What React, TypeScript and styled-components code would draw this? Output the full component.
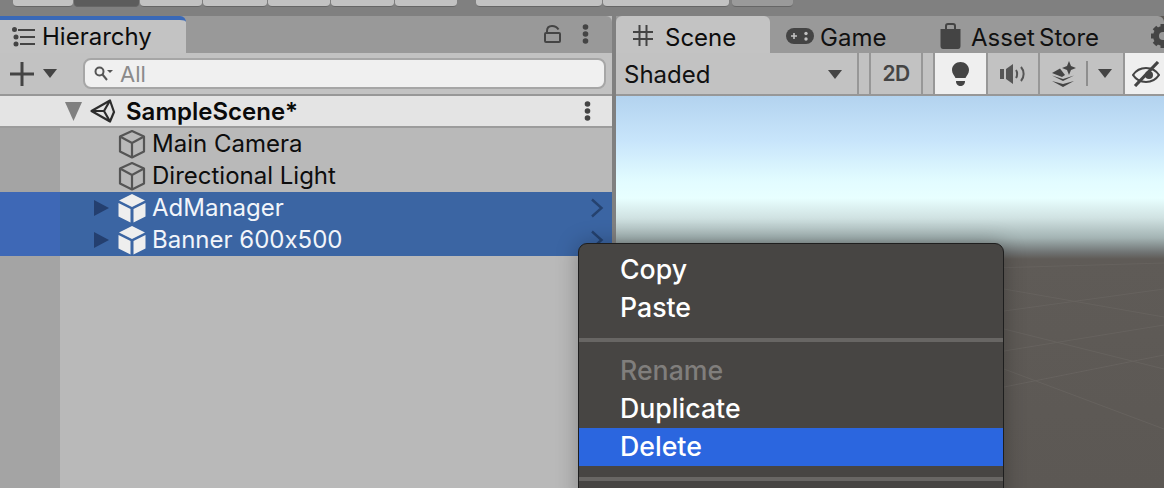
import React from "react"
import styled, { createGlobalStyle } from "styled-components"

const GlobalStyle = createGlobalStyle`
  html, body {
    margin: 0;
    padding: 0;
    width: 1164px;
    height: 488px;
    overflow: hidden;
    background: #808080;
    font-family: Inter, "Liberation Sans", sans-serif;
    font-feature-settings: "calt" 0;
  }
`

const Editor = styled.div`
  position: relative;
  width: 1164px;
  height: 488px;
  overflow: hidden;
  display: flex;
  flex-direction: column;
  background: #808080;
`

const TopBar = styled.div`
  height: 16px;
  flex: none;
  display: flex;
  align-items: flex-start;
  padding-left: 13px;
  gap: 1px;
`

const TopButton = styled.div<{ $w: number; $dark?: boolean; $dim?: boolean; $gapLeft?: number }>`
  width: ${(p) => p.$w}px;
  height: 7px;
  margin-left: ${(p) => p.$gapLeft || 0}px;
  border-radius: 0 0 4px 4px;
  background: ${(p) => (p.$dark ? "#5c5c5c" : p.$dim ? "#9a9a9a" : "#c2c2c2")};
  border-bottom: 1px solid #666;
  box-sizing: border-box;
`

const Panels = styled.div`
  flex: 1;
  display: flex;
  gap: 4px;
  min-height: 0;
`

const LeftPanel = styled.section`
  width: 612px;
  flex: none;
  display: flex;
  flex-direction: column;
  background: #b9b9b9;
`

const RightPanel = styled.section`
  flex: 1;
  display: flex;
  flex-direction: column;
  background: #5d5955;
  min-width: 0;
`

const TabStrip = styled.div`
  height: 37px;
  flex: none;
  display: flex;
  align-items: stretch;
  background: #999;
  border-radius: 0 6px 0 0;
`

const Tab = styled.div<{ $active?: boolean; $w?: number; $focus?: boolean }>`
  width: ${(p) => (p.$w ? `${p.$w}px` : "auto")};
  flex: none;
  box-sizing: border-box;
  display: flex;
  align-items: center;
  font-size: 24px;
  word-spacing: -2.5px;
  color: ${(p) => (p.$active ? "#0c0c0c" : "#111")};
  background: ${(p) => (p.$active ? "#c3c3c3" : "transparent")};
  border-radius: 0 6px 0 0;
  border-top: ${(p) => (p.$focus ? "4px solid #3a69b8" : "none")};
  white-space: nowrap;
`

const HierarchyTab = styled(Tab)`
  padding-left: 12px;
  gap: 6px;
`

const SceneTab = styled(Tab)`
  padding: 5px 0 0 17px;
  gap: 12px;
  border-radius: 6px 6px 0 0;
`

const PlainTab = styled(Tab)<{ $pad: number; $gap: number }>`
  padding: 5px 0 0 ${(p) => p.$pad}px;
  gap: ${(p) => p.$gap}px;
`

const GearSlot = styled.div`
  display: flex;
  align-items: center;
  padding-top: 3px;
`

const TabActions = styled.div`
  margin-left: auto;
  display: flex;
  align-items: center;
  gap: 21px;
  padding: 0 23px 1px 0;
`

const Toolbar = styled.div`
  height: 41px;
  flex: none;
  display: flex;
  align-items: center;
  background: #c2c2c2;
  border-bottom: 2px solid #979797;
`

const AddButton = styled.div`
  width: 83px;
  flex: none;
  display: flex;
  align-items: center;
  padding-left: 10px;
  gap: 9px;
  box-sizing: border-box;
`

const SearchField = styled.div`
  width: 523px;
  height: 31px;
  flex: none;
  box-sizing: border-box;
  display: flex;
  align-items: center;
  gap: 7px;
  padding-left: 9px;
  border: 2px solid #a6a6a6;
  border-radius: 8px;
  background: #f0f0f0;
  font-size: 22px;
  color: #8a8a8a;
`

const SceneRow = styled.div`
  height: 30px;
  flex: none;
  display: flex;
  align-items: center;
  padding-left: 65px;
  background: #e4e4e4;
  border-bottom: 2px solid #9c9c9c;
  font-size: 24px;
  font-weight: 600;
  color: #0a0a0a;
`

const SceneName = styled.span`
  margin-left: 10px;
`

const FoldGap = styled.span`
  width: 8px;
  flex: none;
`

const RowMenu = styled.div`
  margin-left: auto;
  padding-right: 21px;
  display: flex;
`

const Tree = styled.div`
  flex: 1;
  display: flex;
  flex-direction: column;
  background: linear-gradient(90deg, #a4a4a4 0, #a4a4a4 60px, #b9b9b9 60px);
`

const Row = styled.div<{ $selected?: boolean }>`
  height: 32px;
  flex: none;
  display: flex;
  align-items: center;
  padding-left: 94px;
  font-size: 24px;
  color: ${(p) => (p.$selected ? "#f2f5fa" : "#0d0d0d")};
  background: ${(p) =>
    p.$selected
      ? "linear-gradient(90deg, #3e68b6 0, #3e68b6 60px, #3b65a3 60px)"
      : "transparent"};
`

const Expander = styled.span`
  width: 24px;
  flex: none;
  display: flex;
`

const RowLabel = styled.span`
  margin-left: 6px;
  padding-bottom: 2px;
  white-space: nowrap;
`

const RowChevron = styled.span`
  margin-left: auto;
  padding-right: 8px;
  display: flex;
`

const SceneToolbar = styled(Toolbar)`
  align-items: stretch;
  gap: 2px;
  background: #979797;
`

const Dropdown = styled.div`
  width: 241px;
  flex: none;
  box-sizing: border-box;
  display: flex;
  align-items: center;
  justify-content: space-between;
  padding: 2px 15px 0 8px;
  background: #c2c2c2;
  font-size: 24px;
  color: #111;
`

const Spacer = styled.div`
  width: 10px;
  flex: none;
  background: #c2c2c2;
`

const ToolButton = styled.div<{ $w: number; $on?: boolean }>`
  width: ${(p) => p.$w}px;
  flex: none;
  display: flex;
  align-items: center;
  justify-content: center;
  gap: 10px;
  background: ${(p) => (p.$on ? "#efefef" : "#c2c2c2")};
  font-size: 21px;
  font-weight: 600;
  letter-spacing: -0.6px;
  color: #444;
`

const ToolDivider = styled.span`
  width: 2px;
  height: 25px;
  background: #8e8e8e;
`

const Viewport = styled.div`
  position: relative;
  flex: 1;
  overflow: hidden;
  background: linear-gradient(
    180deg,
    #b3d3ef 0,
    #c8e5fb 45px,
    #e2fcff 85px,
    #e8ffff 102px,
    #d0e2e2 122px,
    #a3b3b3 142px,
    #717575 156px,
    #5f5b57 163px,
    #5c5854 392px
  );
`

const GridLines = styled.svg`
  position: absolute;
  left: 0;
  top: 163px;
`

const ContextMenu = styled.div`
  position: absolute;
  left: 578px;
  top: 243px;
  width: 426px;
  height: 260px;
  box-sizing: border-box;
  padding-top: 7px;
  display: flex;
  flex-direction: column;
  background: #474543;
  border: 1px solid #1e1e1e;
  border-radius: 9px 9px 0 0;
  box-shadow: 0 0 22px rgba(0, 0, 0, 0.28);
`

const MenuItem = styled.div<{ $disabled?: boolean; $active?: boolean }>`
  height: 38px;
  flex: none;
  box-sizing: border-box;
  display: flex;
  align-items: center;
  padding: 0 0 2px 41px;
  font-size: 26.7px;
  font-weight: 500;
  color: ${(p) => (p.$disabled ? "#807e7c" : "#fff")};
  background: ${(p) => (p.$active ? "#2b66df" : "transparent")};
`

const MenuSeparator = styled.div`
  height: 4px;
  flex: none;
  margin: 11px 0 10px;
  background: #686664;
`

const UnityCube = ({ solid }: { solid?: boolean }) =>
  solid ? (
    <svg width="28" height="30" viewBox="0 0 28 30" style={{ flex: "none" }}>
      <path d="M14 1 L27 7.5 L14 14 L1 7.5 Z" fill="#eeeeee" />
      <path d="M0.5 10 L12.5 16 V29.5 L0.5 23.5 Z" fill="#eeeeee" />
      <path d="M27.5 10 L15.5 16 V29.5 L27.5 23.5 Z" fill="#eeeeee" />
    </svg>
  ) : (
    <svg width="28" height="30" viewBox="0 0 28 30" fill="none" stroke="#555" strokeWidth="2.2" style={{ flex: "none" }}>
      <path d="M14 2 L26 7.5 V22.5 L14 28.5 L2 22.5 V7.5 Z" strokeLinejoin="round" />
      <path d="M2 7.5 L14 14 L26 7.5 M14 14 V28.5" />
    </svg>
  )

const Triangle = ({ dir, color, w, h }: { dir: "right" | "down"; color: string; w: number; h: number }) => (
  <svg width={w} height={h} viewBox="0 0 10 10" preserveAspectRatio="none" style={{ flex: "none" }}>
    <path d={dir === "right" ? "M0 0 L10 5 L0 10 Z" : "M0 0 H10 L5 10 Z"} fill={color} />
  </svg>
)

const Dots = () => (
  <svg width="7" height="20" viewBox="0 0 7 20" fill="#444" style={{ flex: "none" }}>
    <circle cx="3.5" cy="3" r="2.8" />
    <circle cx="3.5" cy="10" r="2.8" />
    <circle cx="3.5" cy="17" r="2.8" />
  </svg>
)

const ListIcon = () => (
  <svg width="24" height="20" viewBox="0 0 24 20" fill="none" stroke="#444" strokeWidth="2" style={{ flex: "none" }}>
    <path d="M6 3 H23 M8 10 H23 M8 17 H23" />
    <circle cx="2.5" cy="2.5" r="1.5" fill="#444" />
    <circle cx="4" cy="10" r="1.5" fill="#444" />
    <circle cx="4" cy="17" r="1.5" fill="#444" />
  </svg>
)

const LockIcon = () => (
  <svg width="17" height="18" viewBox="0 0 17 18" fill="none" stroke="#444" strokeWidth="2" style={{ flex: "none" }}>
    <path d="M3 8 V6 C3 2.5 5 1 8 1 C11 1 13 2 14.5 4.5" />
    <rect x="1" y="8" width="15" height="9" rx="1" />
  </svg>
)

const PlusIcon = () => (
  <svg width="24" height="24" viewBox="0 0 24 24" fill="#444" style={{ flex: "none" }}>
    <rect x="0" y="10.5" width="24" height="3" />
    <rect x="10.5" y="0" width="3" height="24" />
  </svg>
)

const SearchIcon = () => (
  <svg width="19" height="16" viewBox="0 0 19 16" fill="none" stroke="#555" strokeWidth="2" style={{ flex: "none" }}>
    <circle cx="5.5" cy="5.5" r="4" />
    <path d="M8.5 8.5 L13 14" />
    <path d="M13 4 H19 L16 7 Z" fill="#555" stroke="none" />
  </svg>
)

const UnityLogo = () => (
  <svg width="26" height="24" viewBox="0 0 26 24" fill="none" stroke="#2c2c2c" strokeWidth="2.2" strokeLinejoin="round" style={{ flex: "none" }}>
    <path d="M1.5 12 L20 1.5 L24 13 L20 22.5 Z" />
    <path d="M1.5 12 H14 L20 1.5 M14 12 L20 22.5" />
  </svg>
)

const Chevron = () => (
  <svg width="14" height="20" viewBox="0 0 14 20" fill="none" stroke="#25426f" strokeWidth="2.4" style={{ flex: "none" }}>
    <path d="M2 1.5 L11.5 10 L2 18.5" />
  </svg>
)

const GridIcon = () => (
  <svg width="20" height="21" viewBox="0 0 20 21" fill="none" stroke="#444" strokeWidth="2" style={{ flex: "none", marginTop: -3 }}>
    <path d="M6.5 0 V21 M13.5 0 V21 M0 7 H20 M0 14 H20" />
  </svg>
)

const GamepadIcon = () => (
  <svg width="28" height="16" viewBox="0 0 28 16" style={{ flex: "none", marginTop: -3 }}>
    <rect x="0" y="0" width="28" height="16" rx="8" fill="#444" />
    <path d="M5 8 H11 M8 5 V11" stroke="#c2c2c2" strokeWidth="1.6" />
    <circle cx="20" cy="5.5" r="1.7" fill="#c2c2c2" />
    <circle cx="20" cy="11" r="1.7" fill="#c2c2c2" />
  </svg>
)

const BagIcon = () => (
  <svg width="21" height="26" viewBox="0 0 21 26" style={{ flex: "none", marginTop: -3 }}>
    <path d="M6 7 V3 C6 1.5 7 1 8 1 H13 C14 1 15 1.5 15 3 V7" fill="none" stroke="#444" strokeWidth="2" />
    <path d="M0.5 6 H20.5 V23 C20.5 25 19.5 26 18 26 H3 C1.5 26 0.5 25 0.5 23 Z" fill="#444" />
  </svg>
)

const GearIcon = () => (
  <svg width="26" height="26" viewBox="0 0 26 26" style={{ flex: "none" }}>
    <circle cx="13" cy="13" r="7" fill="none" stroke="#444" strokeWidth="6" />
    <path d="M13 1 V25 M1 13 H25 M4.5 4.5 L21.5 21.5 M21.5 4.5 L4.5 21.5" stroke="#444" strokeWidth="5" />
    <circle cx="13" cy="13" r="4" fill="#999" />
  </svg>
)

const BulbIcon = () => (
  <svg width="17" height="24" viewBox="0 0 17 24" fill="#444">
    <path d="M8.5 0 C13 0 17 3.4 17 8 C17 11.5 14.5 13.5 13.5 16 H3.5 C2.5 13.5 0 11.5 0 8 C0 3.4 4 0 8.5 0 Z" />
    <path d="M4 19 H13 C13 22.5 11 24 8.5 24 C6 24 4 22.5 4 19 Z" />
  </svg>
)

const AudioIcon = () => (
  <svg width="26" height="22" viewBox="0 0 26 22" fill="#555">
    <rect x="0" y="6" width="4" height="10" />
    <path d="M6 6 L13 1 V21 L6 16 Z" />
    <path d="M16 7 C17.5 9 17.5 13 16 15 M21 4 C24.5 8 24.5 14 21 18" fill="none" stroke="#555" strokeWidth="2" />
  </svg>
)

const EffectsIcon = () => (
  <svg width="24" height="26" viewBox="0 0 24 26" fill="#444">
    <path d="M17 0 L19 5 L24 7 L19 9 L17 14 L15 9 L10 7 L15 5 Z" />
    <path d="M0 12 L8 7.5 L13 14 L10 16 Z" />
    <path d="M0 14.5 L11 20 L22 14.5 L11 18 Z" />
    <path d="M0 20 L11 26 L22 20 L11 23 Z" />
  </svg>
)

const HiddenIcon = () => (
  <svg width="28" height="26" viewBox="0 0 28 26" fill="none" stroke="#444" strokeWidth="2.2" style={{ flex: "none" }}>
    <path d="M1 14 C5 8 9 7 14 7 C19 7 23 8 27 14 C23 20 19 21 14 21 C9 21 5 20 1 14 Z" />
    <circle cx="17" cy="14" r="4" fill="#444" stroke="none" />
    <path d="M26 1 L3 25" strokeWidth="3.2" />
  </svg>
)

const App: React.FC = () => (
  <Editor>
    <GlobalStyle />
    <TopBar>
      <TopButton $w={60} />
      <TopButton $w={65} $dark />
      <TopButton $w={62} />
      <TopButton $w={64} />
      <TopButton $w={62} />
      <TopButton $w={63} />
      <TopButton $w={62} />
      <TopButton $w={126} $gapLeft={18} />
      <TopButton $w={126} />
      <TopButton $w={61} $dim $gapLeft={2} />
    </TopBar>
    <Panels>
      <LeftPanel>
        <TabStrip>
          <HierarchyTab $active $focus $w={186}>
            <ListIcon />
            Hierarchy
          </HierarchyTab>
          <TabActions>
            <LockIcon />
            <Dots />
          </TabActions>
        </TabStrip>
        <Toolbar>
          <AddButton>
            <PlusIcon />
            <Triangle dir="down" color="#444" w={14} h={9} />
          </AddButton>
          <SearchField>
            <SearchIcon />
            All
          </SearchField>
        </Toolbar>
        <SceneRow>
          <Triangle dir="down" color="#808080" w={17} h={19} />
          <FoldGap />
          <UnityLogo />
          <SceneName>SampleScene*</SceneName>
          <RowMenu>
            <Dots />
          </RowMenu>
        </SceneRow>
        <Tree>
          <Row>
            <Expander />
            <UnityCube />
            <RowLabel>Main Camera</RowLabel>
          </Row>
          <Row>
            <Expander />
            <UnityCube />
            <RowLabel>Directional Light</RowLabel>
          </Row>
          <Row $selected>
            <Expander>
              <Triangle dir="right" color="#243f6f" w={15} h={16} />
            </Expander>
            <UnityCube solid />
            <RowLabel>AdManager</RowLabel>
            <RowChevron>
              <Chevron />
            </RowChevron>
          </Row>
          <Row $selected>
            <Expander>
              <Triangle dir="right" color="#243f6f" w={15} h={16} />
            </Expander>
            <UnityCube solid />
            <RowLabel>Banner 600x500</RowLabel>
            <RowChevron>
              <Chevron />
            </RowChevron>
          </Row>
        </Tree>
      </LeftPanel>
      <RightPanel>
        <TabStrip>
          <SceneTab $active $w={154}>
            <GridIcon />
            Scene
          </SceneTab>
          <PlainTab $pad={16} $gap={6} $w={170}>
            <GamepadIcon />
            Game
          </PlainTab>
          <PlainTab $pad={0} $gap={10} $w={210}>
            <BagIcon />
            Asset Store
          </PlainTab>
          <GearSlot>
            <GearIcon />
          </GearSlot>
        </TabStrip>
        <SceneToolbar>
          <Dropdown>
            Shaded
            <Triangle dir="down" color="#444" w={14} h={9} />
          </Dropdown>
          <Spacer />
          <ToolButton $w={50}>2D</ToolButton>
          <Spacer />
          <ToolButton $w={51} $on>
            <BulbIcon />
          </ToolButton>
          <ToolButton $w={50}>
            <AudioIcon />
          </ToolButton>
          <ToolButton $w={83}>
            <EffectsIcon />
            <ToolDivider />
            <Triangle dir="down" color="#444" w={14} h={9} />
          </ToolButton>
          <ToolButton $w={42} $on>
            <HiddenIcon />
          </ToolButton>
        </SceneToolbar>
        <Viewport>
          <GridLines width="548" height="230" viewBox="0 0 548 230" fill="none" stroke="#66625e" strokeWidth="1">
            <path d="M0 20 L548 4 M388 52 L548 30 M388 92 L548 66 M388 128 L548 96 M388 30 L548 58 M388 70 L548 110 M388 110 L548 170" />
          </GridLines>
        </Viewport>
      </RightPanel>
    </Panels>
    <ContextMenu>
      <MenuItem>Copy</MenuItem>
      <MenuItem>Paste</MenuItem>
      <MenuSeparator />
      <MenuItem $disabled>Rename</MenuItem>
      <MenuItem>Duplicate</MenuItem>
      <MenuItem $active>Delete</MenuItem>
      <MenuSeparator />
    </ContextMenu>
  </Editor>
)

export default App
